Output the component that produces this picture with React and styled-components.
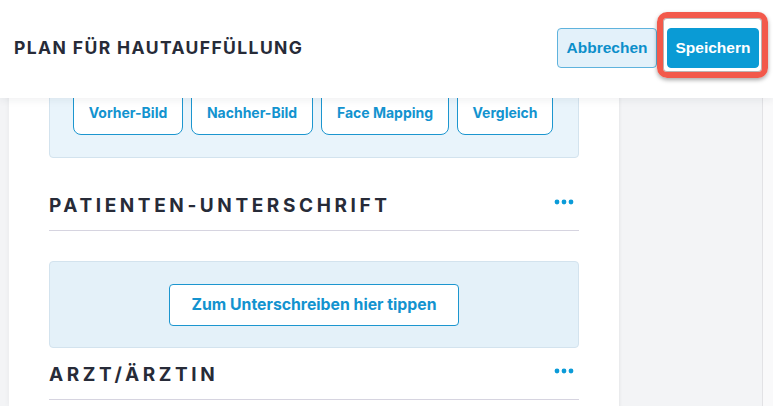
import React from 'react';
import styled, { createGlobalStyle } from 'styled-components';

const GlobalStyle = createGlobalStyle`
	html, body {
		margin: 0;
		padding: 0;
	}
	body {
		font-family: Inter, "Noto Sans", sans-serif;
		-webkit-font-smoothing: antialiased;
	}
`;

const Page = styled.div`
	position: relative;
	display: flex;
	width: 773px;
	height: 406px;
	overflow: hidden;
	background: #f3f4f6;
`;

const Header = styled.header`
	position: absolute;
	top: 0;
	left: 0;
	right: 0;
	height: 98px;
	z-index: 5;
	display: flex;
	justify-content: space-between;
	align-items: center;
	padding: 0 14px;
	box-sizing: border-box;
	background: #ffffff;
	box-shadow: 0 2px 8px rgba(30, 40, 60, 0.07);
`;

const Title = styled.h1`
	margin: 0;
	margin-top: -4px;
	font-size: 17.5px;
	font-weight: 700;
	letter-spacing: 1.4px;
	color: #272b38;
`;

const Actions = styled.div`
	display: flex;
	align-items: center;
	gap: 10px;
	margin-top: -2px;
`;

const HeaderButton = styled.button`
	width: ${p => p.$w}px;
	height: 40px;
	padding: 0;
	border-radius: 4px;
	border: 1px solid ${p => (p.$primary ? '#0a9bd5' : '#5fb3dd')};
	background: ${p => (p.$primary ? '#0a9bd5' : '#e3f1fa')};
	color: ${p => (p.$primary ? '#ffffff' : '#0c8fca')};
	font-family: "Liberation Sans", Arial, sans-serif;
	font-size: 15.5px;
	font-weight: 700;
	white-space: nowrap;
	cursor: pointer;
`;

const Highlight = styled.span`
	position: relative;
	display: inline-flex;
`;

const HighlightRing = styled.span`
	position: absolute;
	left: -10px;
	top: -16px;
	right: -9px;
	bottom: -10px;
	border: 6px solid #f2594b;
	border-radius: 10px;
	box-shadow: 0 2px 4px rgba(0, 0, 0, 0.35), inset 0 0 0 1px rgba(60, 40, 40, 0.35);
	pointer-events: none;
`;

const Gutter = styled.div`
	width: 9px;
	flex-shrink: 0;
	background: #f3f4f6;
`;

const Main = styled.main`
	width: 610px;
	flex-shrink: 0;
	box-sizing: border-box;
	padding: 66px 40px 0 40px;
	background: #ffffff;
	box-shadow: 0 0 6px rgba(0, 0, 0, 0.05);
`;

const Side = styled.aside`
	width: 143px;
	flex-shrink: 0;
	background: #f3f4f6;
	box-shadow: inset 3px 0 3px -2px rgba(0, 0, 0, 0.06);
	border-right: 1px solid #e2e2e5;
`;

const Edge = styled.div`
	flex: 1;
	background: #f9f9fa;
`;

const Card = styled.div`
	box-sizing: border-box;
	height: ${p => p.$height}px;
	padding: 0 23px;
	border: 1px solid #d3e3ee;
	border-radius: 4px;
	background: ${p => p.$bg || '#e9f4fb'};
	display: flex;
	align-items: center;
	justify-content: ${p => (p.$center ? 'center' : 'flex-start')};
	gap: 8px;
`;

const PhotoButton = styled.button`
	flex-shrink: 0;
	width: ${p => p.$w}px;
	height: 46px;
	padding: 0;
	border: 1px solid #1c96cf;
	border-radius: 8px;
	background: #ffffff;
	color: #1393cf;
	font-family: Inter, sans-serif;
	font-size: 14px;
	font-weight: 700;
	white-space: nowrap;
	cursor: pointer;
`;

const SignButton = styled.button`
	width: 290px;
	height: 42px;
	border: 1px solid #1c96cf;
	border-radius: 4px;
	background: #ffffff;
	color: #1393cf;
	font-family: Inter, sans-serif;
	font-size: 15.8px;
	font-weight: 700;
	white-space: nowrap;
	cursor: pointer;
`;

const SectionHead = styled.div`
	display: flex;
	justify-content: space-between;
	align-items: flex-start;
	margin-top: ${p => p.$top}px;
	margin-bottom: 30px;
	padding-bottom: 12px;
	border-bottom: 1px solid #d6d4e0;
`;

const SectionTitle = styled.h2`
	margin: 0;
	font-size: 19px;
	line-height: 24px;
	font-weight: 700;
	letter-spacing: 3.6px;
	color: #272b38;
`;

const MoreButton = styled.button`
	display: flex;
	margin: 5px 5px 0 0;
	padding: 0;
	border: 0;
	background: none;
	cursor: pointer;
`;

const Dots = () => (
	<svg width="20" height="6" viewBox="0 0 20 6">
		<circle cx="3" cy="3" r="2.4" fill="#0b9bd8" />
		<circle cx="10" cy="3" r="2.4" fill="#0b9bd8" />
		<circle cx="17" cy="3" r="2.4" fill="#0b9bd8" />
	</svg>
);

const photos = [
	{ label: 'Vorher-Bild', w: 110 },
	{ label: 'Nachher-Bild', w: 122 },
	{ label: 'Face Mapping', w: 128 },
	{ label: 'Vergleich', w: 96 },
];

const App = () => {
	return (
		<Page>
			<GlobalStyle />
			<Header>
				<Title>PLAN FÜR HAUTAUFFÜLLUNG</Title>
				<Actions>
					<HeaderButton $w={100}>Abbrechen</HeaderButton>
					<Highlight>
						<HeaderButton $primary $w={92}>Speichern</HeaderButton>
						<HighlightRing />
					</Highlight>
				</Actions>
			</Header>
			<Gutter />
			<Main>
				<Card $height={92}>
					{photos.map(p => (
						<PhotoButton key={p.label} $w={p.w}>{p.label}</PhotoButton>
					))}
				</Card>
				<SectionHead $top={36}>
					<SectionTitle>PATIENTEN-UNTERSCHRIFT</SectionTitle>
					<MoreButton aria-label="mehr"><Dots /></MoreButton>
				</SectionHead>
				<Card $center $height={87} $bg="#e4f1f9">
					<SignButton>Zum Unterschreiben hier tippen</SignButton>
				</Card>
				<SectionHead $top={15}>
					<SectionTitle>ARZT/ÄRZTIN</SectionTitle>
					<MoreButton aria-label="mehr"><Dots /></MoreButton>
				</SectionHead>
			</Main>
			<Side />
			<Edge />
		</Page>
	);
};

export default App;
